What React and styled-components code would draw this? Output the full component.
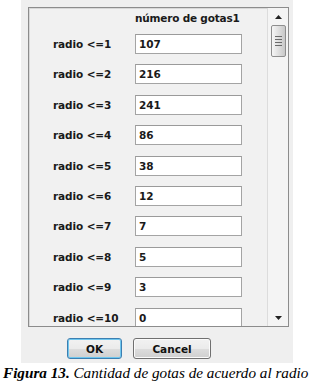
import React from "react";
import styled, { createGlobalStyle } from "styled-components";

const Global = createGlobalStyle`
  html, body { margin: 0; padding: 0; background: #ffffff; }
  body { width: 310px; height: 384px; overflow: hidden; }
`;

const Page = styled.div`
  width: 310px;
  height: 384px;
  display: flex;
  flex-direction: column;
`;

const Panel = styled.div`
  margin-left: 21px;
  width: 272px;
  height: 363px;
  box-sizing: border-box;
  background: #efefef;
  padding: 7px 4px 0 7px;
  display: flex;
  flex-direction: column;
`;

const ListBox = styled.div`
  height: 320px;
  box-sizing: border-box;
  border: 1px solid #8c8c8c;
  box-shadow: inset 1px 1px 0 #d8d8d8;
  display: flex;
  overflow: hidden;
  background: #f1f1f1;
`;

const Content = styled.div`
  flex: 1;
  display: grid;
  grid-template-columns: 82px 107px;
  grid-template-rows: 20.8px;
  grid-auto-rows: 30.4px;
  align-content: start;
  padding-left: 24px;
  font-family: "DejaVu Sans", Tahoma, sans-serif;
  font-size: 10.5px;
  font-weight: bold;
  color: #1a1a1a;
`;

const Header = styled.div`
  grid-column: 2;
  display: flex;
  align-items: center;
  white-space: nowrap;
  letter-spacing: -0.2px;
`;

const Label = styled.div`
  display: flex;
  align-items: center;
  white-space: nowrap;
  letter-spacing: -0.1px;
`;

const Field = styled.div`
  align-self: center;
  height: 20px;
  box-sizing: border-box;
  border: 1px solid #a4a4a4;
  border-top-color: #9a9a9a;
  background: #ffffff;
  display: flex;
  align-items: center;
  padding-left: 3px;
`;

const ScrollBar = styled.div`
  width: 20px;
  border-left: 1px solid #dcdcdc;
  background: #f4f4f4;
  display: flex;
  flex-direction: column;
  align-items: center;
`;

const Arrow = styled.div`
  height: 17px;
  width: 100%;
  display: flex;
  align-items: center;
  justify-content: center;
`;

const Thumb = styled.div`
  width: 15px;
  height: 32px;
  box-sizing: border-box;
  border: 1px solid #8e8e8e;
  border-radius: 2px;
  background: linear-gradient(to right, #f6f6f6, #dadada 60%, #c8c8c8);
  display: flex;
  flex-direction: column;
  align-items: center;
  justify-content: center;
  gap: 2px;
`;

const Grip = styled.div`
  width: 7px;
  height: 1px;
  background: #6a6a6a;
`;

const Track = styled.div`
  flex: 1;
`;

const Buttons = styled.div`
  display: flex;
  gap: 11px;
  padding-left: 39px;
  padding-top: 11px;
`;

const Button = styled.div`
  width: ${(p) => p.$w}px;
  height: 21px;
  box-sizing: border-box;
  border: 1px solid ${(p) => (p.$default ? "#3c7fb1" : "#707070")};
  box-shadow: ${(p) => (p.$default ? "inset 0 0 0 1px #6fc6ee" : "inset 0 0 0 1px #fbfbfb")};
  border-radius: 3px;
  background: linear-gradient(#f2f2f2, #ebebeb 50%, #dddddd 51%, #cfcfcf);
  display: flex;
  align-items: center;
  justify-content: center;
  font-family: "DejaVu Sans", Tahoma, sans-serif;
  font-size: 10.5px;
  font-weight: bold;
  color: #111;
`;

const Caption = styled.div`
  padding-left: 3px;
  margin-top: 1px;
  font-family: "Liberation Serif", "Times New Roman", serif;
  font-style: italic;
  font-size: 15.2px;
  line-height: 17px;
  color: #000;
  white-space: nowrap;
`;

const rows = [
  ["radio <=1", "107"],
  ["radio <=2", "216"],
  ["radio <=3", "241"],
  ["radio <=4", "86"],
  ["radio <=5", "38"],
  ["radio <=6", "12"],
  ["radio <=7", "7"],
  ["radio <=8", "5"],
  ["radio <=9", "3"],
  ["radio <=10", "0"],
];

export default function App() {
  return (
    <Page>
      <Global />
      <Panel>
        <ListBox>
          <Content>
            <Label />
            <Header>número de gotas1</Header>
            {rows.map(([l, v]) => (
              <React.Fragment key={l}>
                <Label>{l}</Label>
                <Field>{v}</Field>
              </React.Fragment>
            ))}
          </Content>
          <ScrollBar>
            <Arrow>
              <svg width="7" height="4" viewBox="0 0 7 4"><path d="M0 4 L3.5 0 L7 4 Z" fill="#222" /></svg>
            </Arrow>
            <Thumb>
              <Grip />
              <Grip />
              <Grip />
              <Grip />
            </Thumb>
            <Track />
            <Arrow>
              <svg width="7" height="4" viewBox="0 0 7 4"><path d="M0 0 L3.5 4 L7 0 Z" fill="#222" /></svg>
            </Arrow>
          </ScrollBar>
        </ListBox>
        <Buttons>
          <Button $w={55} $default>OK</Button>
          <Button $w={78}>Cancel</Button>
        </Buttons>
      </Panel>
      <Caption>
        <b>Figura 13.</b> Cantidad de gotas de acuerdo al radio
      </Caption>
    </Page>
  );
}
